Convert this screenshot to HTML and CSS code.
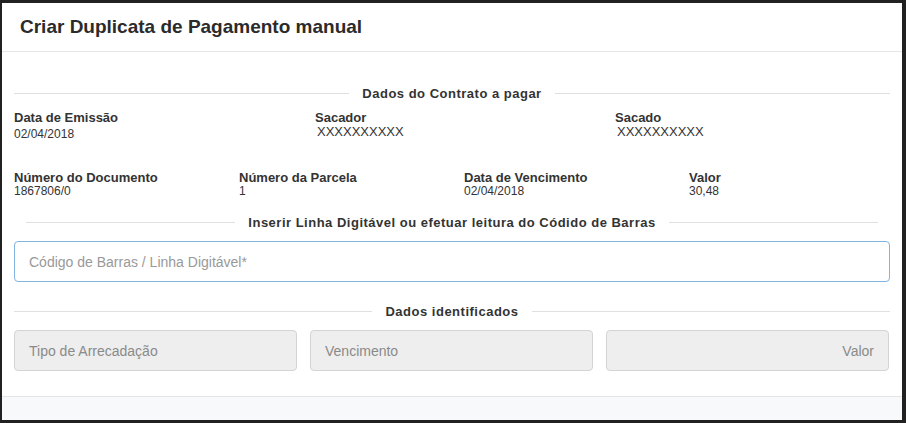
FILE: index.html
```html
<!DOCTYPE html>
<html lang="pt-BR">
<head>
    <meta charset="UTF-8">
    <meta name="viewport" content="width=device-width, initial-scale=1.0">
    <title>Criar Duplicata de Pagamento manual</title>
    <link rel="stylesheet" href="styles.css">
</head>
<body>
    <div class="modal">
        <div class="modal-header">
            <h4 class="modal-title">Criar Duplicata de Pagamento manual</h4>
        </div>

        <div class="modal-body">
            <div class="divider">Dados do Contrato a pagar</div>

            <div class="fields fields-3">
                <div class="field">
                    <span class="label">Data de Emissão</span>
                    <span class="value">02/04/2018</span>
                </div>
                <div class="field">
                    <span class="label">Sacador</span>
                    <span class="value value-lg">XXXXXXXXXX</span>
                </div>
                <div class="field">
                    <span class="label">Sacado</span>
                    <span class="value value-lg">XXXXXXXXXX</span>
                </div>
            </div>

            <div class="fields fields-4">
                <div class="field">
                    <span class="label">Número do Documento</span>
                    <span class="value">1867806/0</span>
                </div>
                <div class="field">
                    <span class="label">Número da Parcela</span>
                    <span class="value">1</span>
                </div>
                <div class="field">
                    <span class="label">Data de Vencimento</span>
                    <span class="value">02/04/2018</span>
                </div>
                <div class="field">
                    <span class="label">Valor</span>
                    <span class="value">30,48</span>
                </div>
            </div>

            <div class="divider divider-inset">Inserir Linha Digitável ou efetuar leitura do Códido de Barras</div>

            <input class="form-control focus" type="text" placeholder="Código de Barras / Linha Digitável*">

            <div class="divider divider-3">Dados identificados</div>

            <div class="identified">
                <input class="form-control" type="text" placeholder="Tipo de Arrecadação" disabled>
                <input class="form-control" type="text" placeholder="Vencimento" disabled>
                <input class="form-control text-right" type="text" placeholder="Valor" disabled>
            </div>
        </div>

        <div class="modal-footer"></div>
    </div>
</body>
</html>
```

FILE: styles.css
```css
body {
    margin: 0;
    padding: 3px 4px 3px 2px;
    background-color: #212121;
    font-family: 'Liberation Sans', Arial, sans-serif;
    color: #333;
}

.modal {
    width: 900px;
    height: 417px;
    background: #fff;
    display: flex;
    flex-direction: column;
    overflow: hidden;
}

.modal-header {
    height: 48px;
    padding: 0 18px;
    display: flex;
    align-items: center;
    border-bottom: 1px solid #e5e5e5;
}

.modal-title {
    margin: 0;
    font-size: 19px;
    font-weight: bold;
    color: #2b2b2b;
}

.modal-body {
    flex: 1;
    padding: 33px 12px 0;
}

.modal-footer {
    height: 23px;
    border-top: 1px solid #e5e5e5;
    background: #f8f9fa;
}

/* section titles with a rule on each side */
.divider {
    display: flex;
    align-items: center;
    height: 16px;
    font-size: 13px;
    font-weight: bold;
    letter-spacing: 0.5px;
    white-space: nowrap;
}

.divider::before,
.divider::after {
    content: "";
    flex: 1;
    height: 1px;
    background: #e0e0e0;
}

.divider::before {
    margin-right: 13px;
}

.divider::after {
    margin-left: 13px;
}

.divider-inset {
    margin: 16px 12px 11px;
}

.divider-3 {
    margin: 21px 0 11px;
}

.fields {
    display: grid;
}

.fields-3 {
    grid-template-columns: 301px 300px 1fr;
    margin-top: 9px;
}

.fields-4 {
    grid-template-columns: 225px 225px 225px 1fr;
    margin-top: 30px;
}

.field {
    display: flex;
    flex-direction: column;
}

.label {
    font-size: 13px;
    font-weight: bold;
    line-height: 15px;
}

.value {
    font-size: 12px;
    line-height: 14px;
    margin-top: 2px;
}

.fields-4 .label {
    line-height: 14px;
}

.fields-4 .value {
    margin-top: -1px;
}

.value-lg {
    font-size: 13px;
    margin-top: 0;
    padding-left: 2px;
}

.form-control {
    display: block;
    box-sizing: border-box;
    width: 100%;
    height: 41px;
    margin: 0;
    padding: 0 14px;
    border: 1px solid #ccc;
    border-radius: 4px;
    background: #fff;
    font-family: inherit;
    font-size: 14px;
    color: #555;
    outline: none;
}

.form-control::placeholder {
    color: #999;
}

.form-control.focus {
    border-color: #82b4e0;
}

.form-control:disabled {
    background: #eee;
    border-color: #d4d4d4;
}

.form-control:disabled::placeholder {
    color: #8a8a8a;
}

.text-right {
    text-align: right;
}

.identified {
    display: grid;
    grid-template-columns: repeat(3, 1fr);
    gap: 13px;
    padding-right: 1px;
}
```
